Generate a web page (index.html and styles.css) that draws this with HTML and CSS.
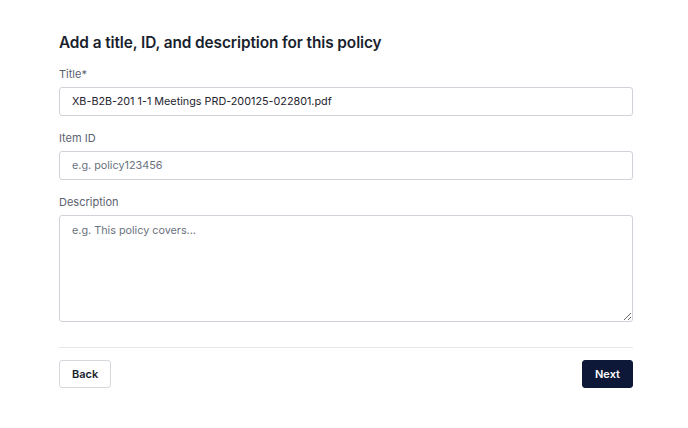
FILE: index.html
```html
<!DOCTYPE html>
<html>
<head>
<meta charset="utf-8">
<link rel="stylesheet" href="styles.css">
</head>
<body>
<div class="page">
  <h1 class="heading">Add a title, ID, and description for this policy</h1>
  <div class="field">
    <label class="label">Title*</label>
    <input class="input" type="text" value="XB-B2B-201 1-1 Meetings PRD-200125-022801.pdf">
  </div>
  <div class="field">
    <label class="label">Item ID</label>
    <input class="input" type="text" placeholder="e.g. policy123456">
  </div>
  <div class="field">
    <label class="label">Description</label>
    <textarea class="textarea" placeholder="e.g. This policy covers..."></textarea>
  </div>
  <div class="divider"></div>
  <div class="actions">
    <button class="btn btn-back">Back</button>
    <button class="btn btn-next">Next</button>
  </div>
</div>
</body>
</html>
```

FILE: styles.css
```css
* { box-sizing: border-box; }
html, body { margin: 0; padding: 0; background: #fff; }
body { font-family: Inter, "Noto Sans", sans-serif; color: #111827; }
.page { width: 688px; padding: 32px 55px 0 59px; }
.heading { margin: 0 0 12px; font-size: 15.4px; font-weight: 600; line-height: 22px; color: #1a1f2e; letter-spacing: -0.1px; }
.field { display: flex; flex-direction: column; margin-bottom: 14px; }
.label { font-size: 11px; line-height: 16px; color: #5b6270; margin-bottom: 5px; }
.input { height: 29px; border: 1px solid #cfd3d9; border-radius: 3px; padding: 0 12px; font-family: inherit; font-size: 10.8px; color: #1f2430; outline: none; }
.input::placeholder, .textarea::placeholder { color: #6b7280; }
.textarea { height: 107px; border: 1px solid #cfd3d9; border-radius: 3px; padding: 8px 12px; font-family: inherit; font-size: 10.8px; resize: vertical; outline: none; }
.divider { height: 1px; background: #e5e7eb; margin-top: 25px; }
.actions { display: flex; justify-content: space-between; margin-top: 12px; }
.btn { height: 28px; border-radius: 3px; font-family: inherit; font-size: 11px; font-weight: 600; padding: 0 12px; cursor: pointer; }
.btn-back { background: #fff; border: 1px solid #d5d8dd; color: #1a1f2e; width: 52px; }
.btn-next { background: #0d1838; border: 1px solid #0d1838; color: #fff; width: 51px; }
```
